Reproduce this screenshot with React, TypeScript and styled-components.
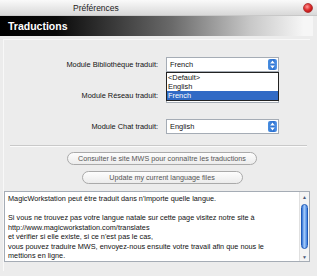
import React from 'react'
import styled, { createGlobalStyle } from 'styled-components';

const GlobalStyle = createGlobalStyle`
  html, body {
    margin: 0;
    padding: 0;
    background: #ececec;
  }
  * {
    box-sizing: border-box;
  }
`;

const languages = ['<Default>', 'English', 'French'];

const rows = [
  { label: 'Module Bibliothèque traduit:', value: 'French', open: true },
  { label: 'Module Réseau traduit:', value: '', open: false },
  { label: 'Module Chat traduit:', value: 'English', open: false },
];

const infoText = `MagicWorkstation peut être traduit dans n'importe quelle langue.

Si vous ne trouvez pas votre langue natale sur cette page visitez notre site à
http://www.magicworkstation.com/translates
et vérifier si elle existe, si ce n'est pas le cas,
vous pouvez traduire MWS, envoyez-nous ensuite votre travail afin que nous le
mettions en ligne.`;

const SelectArrow: React.FC = () => (
  <ArrowButton>
    <svg width="5" height="9" viewBox="0 0 5 9">
      <path d="M2.5 0.5 L4.8 3.6 L0.2 3.6 Z" fill="#fff" />
      <path d="M2.5 8.5 L4.8 5.4 L0.2 5.4 Z" fill="#fff" />
    </svg>
  </ArrowButton>
);

const App: React.FC = () => {
  return (
    <Window>
      <GlobalStyle />
      <TitleBar>
        <WindowTitle>Préférences</WindowTitle>
        <CloseButton />
      </TitleBar>
      <Header>Traductions</Header>
      <Panel>
        <FormGrid>
          {rows.map((row) => (
            <React.Fragment key={row.label}>
              <Label>{row.label}</Label>
              <SelectWrap>
                <Select>
                  <span>{row.value}</span>
                  <SelectArrow />
                </Select>
                {row.open && (
                  <DropList>
                    {languages.map((lang) => (
                      <DropItem key={lang} $selected={lang === row.value}>{lang}</DropItem>
                    ))}
                  </DropList>
                )}
              </SelectWrap>
            </React.Fragment>
          ))}
        </FormGrid>
        <Separator />
        <ButtonColumn>
          <PillButton $width={190}>Consulter le site MWS pour connaître les traductions</PillButton>
          <PillButton $width={161}>Update my current language files</PillButton>
        </ButtonColumn>
        <InfoBox>
          <InfoText>{infoText}</InfoText>
          <ScrollBar>
            <ScrollArrow>▲</ScrollArrow>
            <ScrollTrack>
              <ScrollThumb />
            </ScrollTrack>
            <ScrollArrow>▼</ScrollArrow>
          </ScrollBar>
        </InfoBox>
      </Panel>
    </Window>
  );
};

export default App

const Window = styled.div`
  width: 317px;
  height: 276px;
  display: flex;
  flex-direction: column;
  background: #ececec;
  font-family: "Liberation Sans", Arial, sans-serif;
  overflow: hidden;
`;

const TitleBar = styled.div`
  height: 16px;
  display: flex;
  align-items: center;
  padding: 0 4px 0 73px;
  background: linear-gradient(to bottom, #fafafa 0%, #e6e6e6 60%, #d8d8d8 100%);
  border-bottom: 1px solid #c8c8c8;
`;

const WindowTitle = styled.div`
  flex: 1;
  color: #222;
  font-size: 8.5px;
`;

const CloseButton = styled.div`
  width: 10px;
  height: 10px;
  border-radius: 50%;
  background: radial-gradient(circle at 40% 35%, #ff9a9a 0%, #e03030 45%, #a00000 100%);
  border: 1px solid #b03a3a;
`;

const Header = styled.div`
  height: 20px;
  margin-right: 4px;
  display: flex;
  align-items: center;
  padding-left: 8px;
  color: #fff;
  font-size: 10.5px;
  font-weight: 700;
  background: linear-gradient(to right, #000 0%, #0a0a0a 18%, #6a6a6a 55%, #c8c8c8 80%, #f6f6f6 97%);
`;

const Panel = styled.div`
  flex: 1;
  margin: 3px 7px 5px 3px;
  border-top: 1px solid #f8f8f8;
  border-left: 1px solid #f8f8f8;
  display: flex;
  flex-direction: column;
`;

const FormGrid = styled.div`
  display: grid;
  grid-template-columns: 154px 113px;
  column-gap: 8px;
  row-gap: 16px;
  align-items: center;
  padding-top: 17px;
`;

const Label = styled.div`
  text-align: right;
  color: #111;
  font-size: 7.4px;
`;

const SelectWrap = styled.div`
  position: relative;
`;

const Select = styled.div`
  height: 15px;
  display: flex;
  align-items: center;
  justify-content: space-between;
  padding: 0 1px 0 3px;
  background: #fff;
  border: 1px solid #a5acb5;
  color: #111;
  font-size: 7.4px;
`;

const ArrowButton = styled.div`
  width: 9px;
  height: 11px;
  display: flex;
  align-items: center;
  justify-content: center;
  border-radius: 2px;
  background: linear-gradient(to right, #4a8fe0, #2a6fd0 60%, #5b9bea);
`;

const DropList = styled.div`
  position: absolute;
  top: 15px;
  left: 0;
  width: 113px;
  background: #fff;
  border: 1px solid #222;
  z-index: 2;
`;

const DropItem = styled.div<{ $selected?: boolean }>`
  height: 9px;
  line-height: 9px;
  padding-left: 1px;
  font-size: 7.4px;
  color: ${(p) => (p.$selected ? '#fff' : '#111')};
  background: ${(p) => (p.$selected ? '#316ac5' : 'transparent')};
`;

const Separator = styled.div`
  margin: 11px 3px 0 6px;
  height: 2px;
  border-top: 1px solid #c9c9c9;
  border-bottom: 1px solid #fbfbfb;
`;

const ButtonColumn = styled.div`
  display: flex;
  flex-direction: column;
  align-items: center;
  gap: 6px;
  padding-top: 5px;
  padding-left: 10px;
`;

const PillButton = styled.div<{ $width: number }>`
  width: ${(p) => p.$width}px;
  height: 13px;
  display: flex;
  align-items: center;
  justify-content: center;
  border-radius: 7px;
  border: 1px solid #aaa;
  background: linear-gradient(to bottom, #fdfdfd, #ececec);
  color: #555;
  font-size: 7.2px;
`;

const InfoBox = styled.div`
  margin-top: 7px;
  height: 71px;
  display: flex;
  background: #fff;
  border: 1px solid #a5acb5;
`;

const InfoText = styled.div`
  flex: 1;
  padding: 2px 3px;
  white-space: pre-line;
  color: #111;
  font-size: 7.3px;
  line-height: 9.5px;
`;

const ScrollBar = styled.div`
  width: 10px;
  display: flex;
  flex-direction: column;
  background: #f4f4f4;
  border-left: 1px solid #e0e0e0;
`;

const ScrollArrow = styled.div`
  height: 9px;
  display: flex;
  align-items: center;
  justify-content: center;
  color: #4a5a78;
  font-size: 5px;
`;

const ScrollTrack = styled.div`
  flex: 1;
  padding: 3px 1px;
  display: flex;
`;

const ScrollThumb = styled.div`
  flex: 1;
  border-radius: 5px;
  border: 1px solid #1f5ab8;
  background: linear-gradient(to right, #2d6fd6, #a8cdfa 45%, #3f80e0);
`;
